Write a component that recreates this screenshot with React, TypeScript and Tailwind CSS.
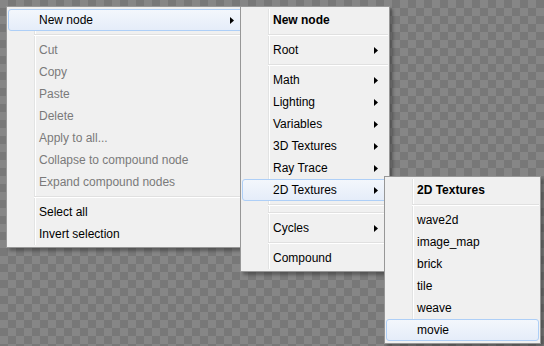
import React from "react";

type Entry =
  | { sep: true }
  | { label: string; bold?: boolean; disabled?: boolean; arrow?: boolean; hover?: boolean };

const Arrow = () => (
  <svg width="4" height="7" viewBox="0 0 4 7" className="shrink-0">
    <path d="M0 0 L4 3.5 L0 7 Z" fill="#000" />
  </svg>
);

const Menu = ({ items, className }: { items: Entry[]; className: string }) => {
  return (
    <div
      className={
        "absolute bg-[#f0f0f0] border border-[#979797] px-[1px] py-[2px] shadow-[3px_3px_3px_rgba(0,0,0,0.3)] " +
        className
      }
    >
      <div className="absolute left-[27px] top-[2px] bottom-[2px] w-[2px] border-l border-[#e2e3e3] bg-white" />
      {items.map((it, i) =>
        "sep" in it ? (
          <div key={i} className="relative h-[8px] pt-[3px] pl-[26px]">
            <div className="h-px bg-[#e0e0e0]" />
            <div className="h-px bg-white" />
          </div>
        ) : (
          <div
            key={i}
            className={
              "relative flex items-center h-[22px] pl-[30px] pr-[9px] border rounded-[3px] " +
              (it.hover
                ? "border-[#aecff7] bg-gradient-to-b from-[#f3f7fc] to-[#e5edf9] "
                : "border-transparent ") +
              (it.disabled ? "text-[#7a7a7a] " : "text-black ") +
              (it.bold ? "font-bold" : "")
            }
          >
            <span className="flex-1 whitespace-nowrap">{it.label}</span>
            {it.arrow && <Arrow />}
          </div>
        )
      )}
    </div>
  );
};

const mainMenu: Entry[] = [
  { label: "New node", arrow: true, hover: true },
  { sep: true },
  { label: "Cut", disabled: true },
  { label: "Copy", disabled: true },
  { label: "Paste", disabled: true },
  { label: "Delete", disabled: true },
  { label: "Apply to all...", disabled: true },
  { label: "Collapse to compound node", disabled: true },
  { label: "Expand compound nodes", disabled: true },
  { sep: true },
  { label: "Select all" },
  { label: "Invert selection" },
];

const nodeMenu: Entry[] = [
  { label: "New node", bold: true },
  { sep: true },
  { label: "Root", arrow: true },
  { sep: true },
  { label: "Math", arrow: true },
  { label: "Lighting", arrow: true },
  { label: "Variables", arrow: true },
  { label: "3D Textures", arrow: true },
  { label: "Ray Trace", arrow: true },
  { label: "2D Textures", arrow: true, hover: true },
  { sep: true },
  { sep: true },
  { label: "Cycles", arrow: true },
  { sep: true },
  { label: "Compound" },
];

const texMenu: Entry[] = [
  { label: "2D Textures", bold: true },
  { sep: true },
  { label: "wave2d" },
  { label: "image_map" },
  { label: "brick" },
  { label: "tile" },
  { label: "weave" },
  { label: "movie", hover: true },
];

export default function App() {
  return (
    <div className="relative w-[544px] h-[346px] overflow-hidden bg-[#7f7f7f] bg-[conic-gradient(#787878_25%,#868686_0_50%,#787878_0_75%,#868686_0)] bg-[length:16px_16px] text-[12px] font-['Liberation_Sans',Arial,sans-serif]">
      <Menu items={mainMenu} className="left-[6px] top-[6px] w-[240px] z-0" />
      <Menu items={nodeMenu} className="left-[240px] top-[6px] w-[150px] z-10" />
      <Menu items={texMenu} className="left-[384px] top-[176px] w-[157px] z-20" />
    </div>
  );
}
